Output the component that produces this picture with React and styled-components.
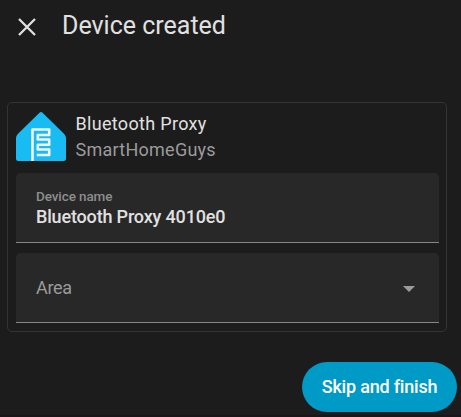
import React from "react";
import styled, { createGlobalStyle } from "styled-components";

const GlobalStyle = createGlobalStyle`
  * { box-sizing: border-box; }
  body { margin: 0; background: #1c1c1c; }
`;

const Dialog = styled.main`
  width: 461px;
  height: 417px;
  display: flex;
  flex-direction: column;
  overflow: hidden;
  background: #1c1c1c;
  color: #e1e1e1;
  font-family: Roboto, sans-serif;
  border-bottom: 2px solid #191518;
`;

const Header = styled.header`
  height: 102px;
  padding: 10px 0 0 14px;
  display: flex;
  align-items: flex-start;
  gap: 22px;
`;

const CloseButton = styled.button`
  width: 26px;
  height: 26px;
  margin-top: 4px;
  padding: 0;
  border: 0;
  background: none;
  color: #e1e1e1;
  svg { display: block; }
`;

const Title = styled.h1`
  margin: 0;
  font-size: 25px;
  font-weight: 400;
  line-height: 32px;
  white-space: nowrap;
`;

const DeviceCard = styled.section`
  width: 440px;
  height: 230px;
  margin-left: 7px;
  padding: 9px 7px 0 8px;
  border: 1px solid #343434;
  border-radius: 5px;
`;

const DeviceHeader = styled.div`
  height: 61px;
  display: flex;
  gap: 9.5px;
`;

const DeviceTexts = styled.div`
  margin-top: -1px;
`;

const DeviceText = styled.div`
  font-size: 18px;
  line-height: 26px;
  letter-spacing: ${(p) => (p.$secondary ? "0.25px" : "0.32px")};
  color: ${(p) => (p.$secondary ? "#9b9b9b" : "#e1e1e1")};
`;

const Field = styled.div`
  height: 70px;
  margin-bottom: 10px;
  padding: 0 20px;
  display: flex;
  align-items: center;
  justify-content: space-between;
  background: #282828;
  border-bottom: 1px solid #858585;
  border-radius: 5px 5px 0 0;
`;

const FieldLabel = styled.div`
  margin-top: -2px;
  font-size: 13.5px;
  line-height: 20px;
  font-weight: 500;
  letter-spacing: -0.1px;
  color: #8e8e8e;
`;

const FieldValue = styled.div`
  font-size: 18px;
  line-height: 22px;
  font-weight: 500;
  letter-spacing: -0.17px;
  color: #e1e1e1;
`;

const Placeholder = styled.span`
  font-size: 18px;
  line-height: 26px;
  letter-spacing: -0.35px;
  color: #9b9b9b;
`;

const Arrow = styled.svg`
  width: 12px;
  height: 6px;
  margin: 2px 4px 0 0;
`;

const Footer = styled.footer`
  padding: 30px 4px 0 0;
  display: flex;
  justify-content: flex-end;
`;

const FinishButton = styled.button`
  width: 155px;
  height: 50px;
  padding: 0;
  border: 0;
  border-radius: 25px;
  background: #009ac7;
  color: #fff;
  font: 500 18px/26px Roboto, sans-serif;
  letter-spacing: -0.2px;
  white-space: nowrap;
`;

const DeviceLogo = () => (
  <svg width="50" height="50" viewBox="0 0 50 50" aria-hidden="true">
    <path
      d="M23.2 1Q25 -.9 26.8 1L48.2 22Q50 23.8 50 26.3V46.5Q50 49 47.5 49H2.5Q0 49 0 46.5V26.3Q0 23.8 1.8 22Z"
      fill="#18bcf2"
    />
    <path
      d="M16.5 49V17.5H33.2V23H21.8V27.5H33.2V32.7H21.8V37.5H33.2V43H20.8"
      fill="none"
      stroke="#f2f4f9"
      strokeWidth="2.6"
      strokeLinejoin="round"
    />
  </svg>
);

export default function App() {
  return (
    <>
      <GlobalStyle />
      <Dialog>
        <Header>
          <CloseButton aria-label="Close">
            <svg width="26" height="26" viewBox="0 0 26 26">
              <path d="M5 5L21 21M21 5L5 21" stroke="currentColor" strokeWidth="2.3" />
            </svg>
          </CloseButton>
          <Title>Device created</Title>
        </Header>
        <DeviceCard>
          <DeviceHeader>
            <DeviceLogo />
            <DeviceTexts>
              <DeviceText>Bluetooth Proxy</DeviceText>
              <DeviceText $secondary>SmartHomeGuys</DeviceText>
            </DeviceTexts>
          </DeviceHeader>
          <Field>
            <div>
              <FieldLabel>Device name</FieldLabel>
              <FieldValue>Bluetooth Proxy 4010e0</FieldValue>
            </div>
          </Field>
          <Field>
            <Placeholder>Area</Placeholder>
            <Arrow viewBox="0 0 12 6" aria-hidden="true">
              <path d="M0 0H12L6 6Z" fill="#9b9b9b" />
            </Arrow>
          </Field>
        </DeviceCard>
        <Footer>
          <FinishButton>Skip and finish</FinishButton>
        </Footer>
      </Dialog>
    </>
  );
}
